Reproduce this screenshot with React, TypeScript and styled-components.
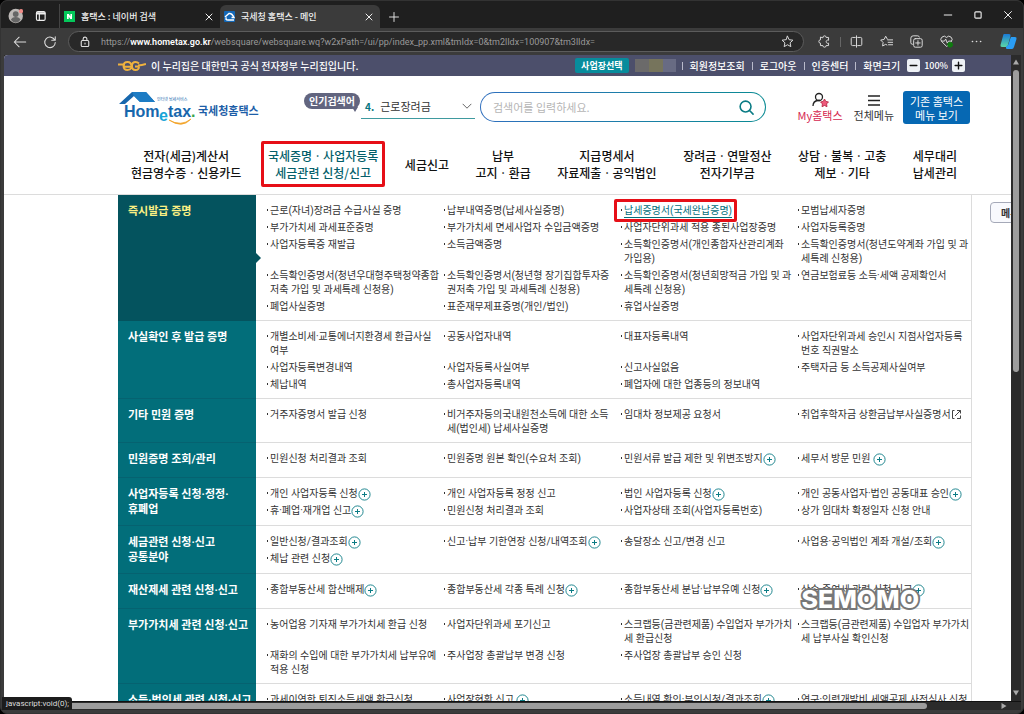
import React from "react";
import styled, { createGlobalStyle, css } from "styled-components";

const Global = createGlobalStyle`
  *, *::before, *::after { box-sizing: border-box; }
  html, body { margin: 0; background: #000; }
  body, button, input, select {
    font-family: "Noto Sans CJK KR", "Noto Sans", sans-serif;
  }
  button, input, select { border: 0; padding: 0; margin: 0; background: none; color: inherit; }
  a { color: inherit; text-decoration: none; }
  ul { list-style: none; margin: 0; padding: 0; }
`;

/* ---------- browser frame ---------- */

const Window = styled.div`
  display: flex;
  flex-direction: column;
  height: 100vh;
  border: 1px solid #333;
  border-radius: 7px;
  background: #3b3b3b;
  overflow: hidden;
  position: relative;
`;

const TitleBar = styled.header`
  display: flex;
  align-items: flex-end;
  flex: none;
  height: 27px;
  padding: 0 10px 0 7px;
  background: #1f1f1f;
  color: #eee;
`;

const TitleTools = styled.div`
  display: flex;
  align-items: center;
  gap: 12px;
  height: 24px;
  width: 52px;
  border-right: 1px solid #444;
  padding-right: 12px;
`;

const Tab = styled.div<{ $active?: boolean }>`
  display: flex;
  align-items: center;
  gap: 6px;
  width: 160px;
  height: 23px;
  padding: 0 7px 0 4px;
  border-radius: 6px 6px 0 0;
  font-size: 9px;
  font-weight: 500;
  background: ${(p) => (p.$active ? "#3b3b3b" : "transparent")};
`;

const TabTitle = styled.span`
  flex: 1;
  white-space: nowrap;
`;

const IconButton = styled.button`
  display: inline-flex;
  align-items: center;
  justify-content: center;
  color: inherit;
  svg { display: block; }
`;

const NewTab = styled(IconButton)`
  width: 28px;
  height: 23px;
`;

const SearchButton = styled(IconButton)`
  color: #0b7c85;
`;

const WindowControls = styled.div`
  display: flex;
  align-items: center;
  gap: 20px;
  height: 27px;
  margin-left: auto;
`;

const Toolbar = styled.div`
  display: flex;
  align-items: center;
  flex: none;
  gap: 16px;
  height: 27px;
  padding: 0 6px 0 12px;
  color: #ddd;
`;

const AddressBar = styled.div`
  display: flex;
  align-items: center;
  flex: 1;
  gap: 10px;
  height: 21px;
  margin: 0 -2px 0 -5px;
  padding: 0 9px 0 10px;
  border: 1px solid #5c5c5c;
  border-radius: 11px;
  background: #282828;
`;

const Url = styled.span`
  flex: 1;
  min-width: 0;
  overflow: hidden;
  white-space: nowrap;
  font-family: Roboto, sans-serif;
  font-size: 9px;
  color: #999;
  b { color: #fff; font-weight: 600; }
`;

const ToolIcons = styled.div`
  display: flex;
  align-items: center;
  gap: 17px;
`;

const Divider = styled.i`
  width: 1px;
  height: 10px;
  margin: 0 -8px;
  background: #666;
`;

const Body = styled.div`
  display: grid;
  grid-template: minmax(0, 1fr) 9px / minmax(0, 1fr) 10px;
  flex: 1;
  min-height: 0;
  margin: 0 2px 3px 3px;
  background: #2b2b2b;
`;

const Viewport = styled.div`
  position: relative;
  overflow: hidden;
  background: #fff;
  border-top-left-radius: 4px;
  color: #333;
`;

const VerticalBar = styled.div`
  display: flex;
  flex-direction: column;
  align-items: center;
  justify-content: space-between;
  padding: 4px 0 5px;
  border-top-right-radius: 4px;
  i { flex: none; width: 6px; height: 302px; margin-bottom: auto; margin-top: 5px; border-radius: 3px; background: #9d9d9d; }
`;

const HorizontalBar = styled.div`
  grid-column: 1 / -1;
  display: flex;
  align-items: center;
  justify-content: space-between;
  padding-right: 14px;
  border-top: 1px solid #111;
  i { width: 92%; height: 6px; border-radius: 3px; background: #9d9d9d; }
`;

const StatusBubble = styled.div`
  position: absolute;
  left: 1px;
  bottom: 3px;
  padding: 0 3px 0 4px;
  border-radius: 0 3px 0 0;
  background: #1c1c1c;
  color: #ddd;
  font-family: Roboto, sans-serif;
  font-size: 8px;
  line-height: 13px;
`;

/* ---------- site ---------- */

const sidePadding = css`
  padding-left: 114px;
  padding-right: 39px;
`;

const GovBar = styled.div`
  ${sidePadding}
  display: flex;
  align-items: center;
  height: 21px;
  background: #4c4f6b;
  color: #fff;
  font-size: 10px;
  font-weight: 500;
  white-space: nowrap;
`;

const GovNotice = styled.span`
  display: flex;
  align-items: center;
  gap: 5px;
`;

const Utilities = styled.div`
  display: flex;
  align-items: center;
  margin-left: auto;
  padding-right: 7px;
  a, span + label, a + label { padding: 0 7px; border-left: 1px solid #b9bacb; line-height: 8px; }
`;

const WorkplaceButton = styled.button`
  height: 15px;
  padding: 0 6px;
  margin-right: 6px;
  border-radius: 2px;
  background: #078c9c;
  color: #fff;
  font-size: 9px;
  font-weight: 700;
  line-height: 15px;
`;

const MaskedName = styled.span`
  width: 41px;
  height: 13px;
  margin-right: 6px;
  background: linear-gradient(90deg, #6b6a6a 0 14px, #76745c 14px 28px, #686b83 28px);
`;

const ZoomButton = styled.button`
  width: 13px;
  height: 13px;
  border-radius: 2px;
  background: #eef1f6;
  color: #111;
  display: flex;
  align-items: center;
  justify-content: center;
`;

const ZoomValue = styled.span`
  padding: 0 4px;
  font-size: 9px;
`;

const Masthead = styled.div`
  ${sidePadding}
  display: flex;
  align-items: flex-start;
  height: 66px;
  padding-top: 15px;
  padding-right: 41px;
`;

const LogoLink = styled.a`
  margin-left: 1px;
  svg { display: block; }
`;

const HotBadge = styled.span`
  position: relative;
  height: 16px;
  margin-left: 42px;
  margin-top: 2px;
  padding: 0 5px;
  border-radius: 8px;
  background: #62657f;
  color: #fff;
  font-size: 10px;
  font-weight: 700;
  line-height: 15px;
  white-space: nowrap;
  &::after {
    content: "";
    position: absolute;
    right: 2px;
    bottom: -3px;
    border: 3px solid transparent;
    border-top: 5px solid #62657f;
    border-bottom: 0;
  }
`;

const HotSelect = styled.label`
  display: flex;
  align-items: center;
  width: 114px;
  height: 28px;
  margin-left: 1px;
  padding: 3px 3px 0 4px;
  border-bottom: 1px solid #3f9a9f;
  font-size: 11px;
  b { color: #087580; font-size: 10px; margin-right: 6px; }
  select { flex: 1; appearance: none; font-size: 11px; color: #333; outline: 0; }
`;

const SearchBox = styled.form`
  display: flex;
  align-items: center;
  flex: 1;
  height: 30px;
  margin-left: 5px;
  margin-top: 1px;
  padding: 0 11px 0 12px;
  border: 1px solid transparent;
  border-radius: 15px;
  background: linear-gradient(#fff, #fff) padding-box, linear-gradient(90deg, #2f6fbe, #0a8b93) border-box;
  input { flex: 1; min-width: 0; font-size: 11px; outline: 0; }
  input::placeholder { color: #b5b5b5; }
`;

const Shortcuts = styled.div`
  display: flex;
  gap: 11px;
  margin-left: 31px;
`;

const Shortcut = styled.a<{ $accent?: boolean }>`
  display: flex;
  flex-direction: column;
  align-items: center;
  font-size: 11px;
  line-height: 16px;
  white-space: nowrap;
  color: ${(p) => (p.$accent ? "#d5264f" : "#333")};
  svg { height: 16px; }
`;

const LegacyButton = styled.button`
  width: 67px;
  height: 33px;
  margin-left: 9px;
  border-radius: 3px;
  background: #0668b3;
  color: #fff;
  font-size: 11px;
  line-height: 14px;
  white-space: nowrap;
`;

const MainNav = styled.nav`
  ${sidePadding}
  height: 53px;
  border-bottom: 1px solid #dcdcdc;
  ul {
    display: flex;
    align-items: center;
    justify-content: space-between;
    height: 44px;
    padding: 0 15px 0 13px;
  }
`;

const NavLink = styled.a<{ $current?: boolean }>`
  position: relative;
  display: block;
  text-align: center;
  font-size: 12px;
  font-weight: 500;
  line-height: 17px;
  white-space: nowrap;
  color: ${(p) => (p.$current ? "#045f6b" : "#111")};
`;

const Marker = styled.span<{ $tight?: boolean }>`
  position: absolute;
  inset: ${(p) => (p.$tight ? "-5px -5px -4px -10px" : "-6px -7px")};
  border: 3px solid #e60f17;
  border-radius: 2px;
`;

const MegaMenu = styled.div`
  ${sidePadding}
  font-family: Roboto, "Noto Sans CJK KR", sans-serif;
`;

const Section = styled.section<{ $current?: boolean }>`
  display: grid;
  grid-template-columns: 138px minmax(0, 1fr);
  min-height: 35px;
  h2 {
    position: relative;
    margin: 0;
    padding: 9px 0 8px 10px;
    border-bottom: 1px solid ${(p) => (p.$current ? "#04535e" : "#056270")};
    background: ${(p) => (p.$current ? "#04535e" : "#026e7a")};
    color: ${(p) => (p.$current ? "#fbf083" : "#fff")};
    font-size: 11px;
    font-weight: 700;
    line-height: 15px;
    white-space: pre;
  }
  h2::after {
    content: ${(p) => (p.$current ? '""' : "none")};
    position: absolute;
    top: 50%;
    left: 100%;
    margin-top: -5px;
    border: 5px solid transparent;
    border-left-color: #04535e;
    border-right: 0;
  }
`;

const Items = styled.ul`
  display: grid;
  grid-template-columns: repeat(3, minmax(0, 1fr)) 174px;
  align-content: start;
  row-gap: 3px;
  padding: 9px 0 6px 10px;
  border-right: 1px solid #dcdcdc;
  border-bottom: 1px solid #dcdcdc;
`;

const Item = styled.li`
  padding-left: 4px;
  position: relative;
  font-size: 10px;
  line-height: 14px;
  white-space: pre;
  &::before {
    content: "";
    position: absolute;
    left: 1px;
    top: 5px;
    width: 1px;
    height: 2px;
    background: #333;
  }
  svg { vertical-align: top; margin: 1px 0 -1px 0; }
`;

const MarkedLink = styled.a`
  position: relative;
  display: inline-block;
  color: #04707c;
  box-shadow: inset 0 -1px #04707c;
`;

const SideMenu = styled.button`
  position: absolute;
  top: 147px;
  left: calc(100% - 21px);
  width: 60px;
  height: 21px;
  padding-left: 10px;
  border: 1px solid #a5a9b8;
  border-radius: 4px;
  background: #f8f9fd;
  font-size: 10px;
  font-weight: 700;
  line-height: 19px;
  text-align: left;
  white-space: nowrap;
`;

const Watermark = styled.div`
  position: absolute;
  right: 92px;
  top: 527px;
  color: #fff;
  font-family: Inter, sans-serif;
  font-size: 25px;
  font-weight: 800;
  line-height: 34px;
  -webkit-text-stroke: 4px #777;
  paint-order: stroke fill;
`;

/* ---------- icons ---------- */

const Svg = ({ s = 12, children, sw = 1.2 }: { s?: number; sw?: number; children: React.ReactNode }) => (
  <svg width={s} height={s} viewBox="0 0 16 16" fill="none" stroke="currentColor" strokeWidth={sw} strokeLinecap="round" strokeLinejoin="round" aria-hidden="true">
    {children}
  </svg>
);

const CloseIcon = ({ s = 8 }: { s?: number }) => (
  <Svg s={s} sw={2}><path d="M2 2l12 12M14 2L2 14" /></Svg>
);

const PlusCircle = () => (
  <svg width="13" height="13" viewBox="0 0 13 13" fill="none" stroke="#0b7c85" aria-hidden="true">
    <circle cx="6.5" cy="6.5" r="5.6" strokeWidth="0.9" />
    <path d="M6.500 4v5M4 6.500h5" strokeWidth="1" />
  </svg>
);

const OpenIcon = () => (
  <svg width="11" height="11" viewBox="0 0 11 11" fill="none" stroke="#444" aria-hidden="true">
    <path d="M3.500 1.500h-2v8h2M6 9.500h3.500V6.500M6 1.500h3.500v3M9.500 1.500L4 7" />
  </svg>
);

const Logo = () => (
  <svg width="143" height="34" viewBox="0 0 143 34" role="img" aria-label="Hometax 국세청홈택스">
    <path d="M0 13L13 1h14l9 10H21l-6-6L6 13z" fill="#1767ad" />
    <path d="M15 5l6 6h15L27 1H13z" fill="#1d7cc4" />
    <g fontFamily="Liberation Sans, sans-serif" fontWeight="700" fontSize="16" fill="#1767ad">
      <text x="5" y="26">Hom</text>
      <text x="40" y="30" fill="#18a5d8">e</text>
      <text x="49" y="26">tax</text>
      <text x="72" y="26" fill="#3aa648">.</text>
    </g>
    <path d="M50 29q12 7 22-1q-9 10-22 1z" fill="#f2a52b" stroke="#f2a52b" strokeWidth="0.8" />
    <text x="38" y="10" fontFamily="Noto Sans CJK KR, sans-serif" fontSize="4" fill="#1767ad">인터넷 납세서비스</text>
    <text x="79" y="24" fontFamily="Noto Sans CJK KR, sans-serif" fontWeight="700" fontSize="11" fill="#1d5ea8">국세청홈택스</text>
  </svg>
);

/* ---------- data ---------- */

type Entry = { t: string; plus?: boolean; open?: boolean; marked?: boolean } | string;

const navItems: { label: [string, string?]; current?: boolean }[] = [
  { label: ["전자(세금)계산서", "현금영수증ㆍ신용카드"] },
  { label: ["국세증명ㆍ사업자등록", "세금관련 신청/신고"], current: true },
  { label: ["세금신고"] },
  { label: ["납부", "고지ㆍ환급"] },
  { label: ["지급명세서", "자료제출ㆍ공익법인"] },
  { label: ["장려금ㆍ연말정산", "전자기부금"] },
  { label: ["상담ㆍ불복ㆍ고충", "제보ㆍ기타"] },
  { label: ["세무대리", "납세관리"] },
];

const p = (t: string): Entry => ({ t, plus: true });

const sections: { title: string; current?: boolean; items: Entry[] }[] = [
  {
    title: "즉시발급 증명",
    current: true,
    items: [
      "근로(자녀)장려금 수급사실 증명", "납부내역증명(납세사실증명)", { t: "납세증명서(국세완납증명)", marked: true }, "모범납세자증명",
      "부가가치세 과세표준증명", "부가가치세 면세사업자 수입금액증명", "사업자단위과세 적용 종된사업장증명", "사업자등록증명",
      "사업자등록증 재발급", "소득금액증명", "소득확인증명서(개인종합자산관리계좌\n가입용)", "소득확인증명서(청년도약계좌 가입 및 과\n세특례 신청용)",
      "소득확인증명서(청년우대형주택청약종합\n저축 가입 및 과세특례 신청용)", "소득확인증명서(청년형 장기집합투자증\n권저축 가입 및 과세특례 신청용)", "소득확인증명서(청년희망적금 가입 및 과\n세특례 신청용)", "연금보험료등 소득·세액 공제확인서",
      "폐업사실증명", "표준재무제표증명(개인/법인)", "휴업사실증명",
    ],
  },
  {
    title: "사실확인 후 발급 증명",
    items: [
      "개별소비세·교통에너지환경세 환급사실\n여부", "공동사업자내역", "대표자등록내역", "사업자단위과세 승인시 지점사업자등록\n번호 직권말소",
      "사업자등록변경내역", "사업자등록사실여부", "신고사실없음", "주택자금 등 소득공제사실여부",
      "체납내역", "총사업자등록내역", "폐업자에 대한 업종등의 정보내역",
    ],
  },
  {
    title: "기타 민원 증명",
    items: ["거주자증명서 발급 신청", "비거주자등의국내원천소득에 대한 소득\n세(법인세) 납세사실증명", "임대차 정보제공 요청서", { t: "취업후학자금 상환금납부사실증명서", open: true }],
  },
  {
    title: "민원증명 조회/관리",
    items: ["민원신청 처리결과 조회", "민원증명 원본 확인(수요처 조회)", p("민원서류 발급 제한 및 위변조방지"), p("세무서 방문 민원 ")],
  },
  {
    title: "사업자등록 신청·정정·\n휴폐업",
    items: [
      p("개인 사업자등록 신청"), "개인 사업자등록 정정 신고", p("법인 사업자등록 신청"), p("개인 공동사업자·법인 공동대표 승인"),
      p("휴·폐업·재개업 신고"), "민원신청 처리결과 조회", "사업자상태 조회(사업자등록번호)", "상가 임대차 확정일자 신청 안내",
    ],
  },
  {
    title: "세금관련 신청·신고\n공통분야",
    items: [
      p("일반신청/결과조회"), p("신고·납부 기한연장 신청/내역조회"), "송달장소 신고/변경 신고", p("사업용·공익법인 계좌 개설/조회"),
      p("체납 관련 신청"),
    ],
  },
  {
    title: "재산제세 관련 신청·신고",
    items: [p("종합부동산세 합산배제"), p("종합부동산세 각종 특례 신청"), p("종합부동산세 분납·납부유예 신청"), p("상속·증여세 관련 신청·신고")],
  },
  {
    title: "부가가치세 관련 신청·신고",
    items: [
      "농어업용 기자재 부가가치세 환급 신청", "사업자단위과세 포기신고", "스크랩등(금관련제품) 수입업자 부가가치\n세 환급신청", "스크랩등(금관련제품) 수입업자 부가가치\n세 납부사실 확인신청",
      "재화의 수입에 대한 부가가치세 납부유예\n적용 신청", "주사업장 총괄납부 변경 신청", "주사업장 총괄납부 승인 신청",
    ],
  },
  {
    title: "소득·법인세 관련 신청·신고",
    items: ["과세이연한 퇴직소득세액 환급신청", p("사업장현황 신고 "), p("소득내역 확인·부인신청/결과조회"), "연구·인력개발비 세액공제 사전심사 신청"],
  },
];

const MenuEntry = ({ entry }: { entry: Entry }) => {
  const e = typeof entry === "string" ? { t: entry } : entry;
  return (
    <Item>
      {e.marked ? (
        <MarkedLink href="#">{e.t}<Marker $tight /></MarkedLink>
      ) : (
        <a href="#">{e.t}</a>
      )}
      {e.plus && <PlusCircle />}
      {e.open && <OpenIcon />}
    </Item>
  );
};

/* ---------- page ---------- */

export default function App() {
  return (
    <>
      <Global />
      <Window>
        <TitleBar>
          <TitleTools>
            <svg width="16" height="16" viewBox="0 0 16 16" aria-hidden="true">
              <circle cx="8" cy="8" r="7.5" fill="#bdb9b6" />
              <circle cx="8" cy="6" r="3" fill="#666" />
              <path d="M3 12q1-3 5-3t5 3q-2 3-5 3t-5-3z" fill="#666" />
              <circle cx="13.5" cy="3" r="2.2" fill="#f08c88" />
            </svg>
            <Svg s={12} sw={1.6}><rect x="2" y="2" width="12" height="12" rx="2" /><path d="M2 5h12M6 5v9M2.5 3.5h11" /></Svg>
          </TitleTools>
          <Tab>
            <svg width="11" height="11" viewBox="0 0 11 11" aria-hidden="true">
              <rect width="11" height="11" fill="#04c75a" />
              <path d="M3 8V3h1.8l1.6 2.5V3H8v5H6.300L4.700 5.600V8z" fill="#fff" />
            </svg>
            <TabTitle>홈택스 : 네이버 검색</TabTitle>
            <IconButton aria-label="탭 닫기"><CloseIcon /></IconButton>
          </Tab>
          <Tab $active>
            <svg width="11" height="11" viewBox="0 0 11 11" aria-hidden="true">
              <rect width="11" height="11" rx="1" fill="#1368b8" />
              <path d="M1 6L5 2.500q3-.5 5 4H7.500M2.500 6.500Q1 9 4 9h6" fill="none" stroke="#fff" strokeWidth="1.400" />
            </svg>
            <TabTitle>국세청 홈택스 - 메인</TabTitle>
            <IconButton aria-label="탭 닫기"><CloseIcon /></IconButton>
          </Tab>
          <NewTab aria-label="새 탭"><Svg s={12}><path d="M8 2v12M2 8h12" /></Svg></NewTab>
          <WindowControls>
            <IconButton aria-label="최소화"><Svg s={10} sw={1.6}><path d="M2 8h12" /></Svg></IconButton>
            <IconButton aria-label="최대화"><Svg s={10} sw={1.800}><rect x="3" y="3" width="10" height="10" rx="1.500" /></Svg></IconButton>
            <IconButton aria-label="닫기"><Svg s={10} sw={1.6}><path d="M2.500 2.500l11 11M13.500 2.500l-11 11" /></Svg></IconButton>
          </WindowControls>
        </TitleBar>

        <Toolbar>
          <IconButton aria-label="뒤로"><Svg s={14}><path d="M14.500 8h-13M7 2.500L1.500 8 7 13.500" /></Svg></IconButton>
          <IconButton aria-label="새로 고침"><Svg s={14}><path d="M13.500 6A6 6 0 1 0 14 8.500M14 2v4h-4" /></Svg></IconButton>
          <AddressBar>
            <Svg s={12} sw={1.5}><rect x="3" y="6" width="10" height="8" rx="1.500" /><path d="M5.500 6V4a2.500 2.500 0 0 1 5 0v2M8 9.500v1" /></Svg>
            <Url>https://<b>www.hometax.go.kr</b>/websquare/websquare.wq?w2xPath=/ui/pp/index_pp.xml&amp;tmIdx=0&amp;tm2lIdx=100907&amp;tm3lIdx=</Url>
            <IconButton aria-label="즐겨찾기 추가"><Svg s={13}><path d="M8 1.500l2 4.300 4.700.600-3.500 3.200.900 4.700L8 12l-4.100 2.300.900-4.700L1.300 6.400 6 5.800z" /></Svg></IconButton>
          </AddressBar>
          <ToolIcons>
            <IconButton aria-label="확장"><Svg s={13}><path d="M6 3a2 2 0 0 1 4 0h3v3.500a2 2 0 1 0 0 3.500v3H10a2 2 0 0 1-4 0H3v-3a2 2 0 0 1 0-4V3z" /></Svg></IconButton>
            <Divider />
            <IconButton aria-label="화면 분할"><Svg s={13}><path d="M6.500 3H3a1.500 1.500 0 0 0-1.500 1.500v7A1.500 1.500 0 0 0 3 13h3.500M9.500 3H13a1.500 1.500 0 0 1 1.500 1.500v7A1.500 1.500 0 0 1 13 13H9.500M8 1v14" /></Svg></IconButton>
            <IconButton aria-label="즐겨찾기"><Svg s={13}><path d="M9 5L7 1.500 5 5.500.800 6.200l3 3-.600 4.300L7 11.500l1.500.800M9.500 6h6M10 9h5.500M10.500 12h5" /></Svg></IconButton>
            <IconButton aria-label="컬렉션"><Svg s={13}><path d="M3 11.500A2 2 0 0 1 1 9.500V4a3 3 0 0 1 3-3h5.500a2 2 0 0 1 2 1.500" /><rect x="4.500" y="4.500" width="10.500" height="10.500" rx="2" /><path d="M9.800 7v5.500M7 9.800h5.500" /></Svg></IconButton>
            <IconButton aria-label="브라우저 필수 요소">
              <Svg s={13}><path d="M8 14L2 8a3.800 3.800 0 0 1 6-5 3.800 3.800 0 0 1 6 5zM2 7.500h3.500L7 5l2 5 1.500-2.500H14" /><circle cx="12.500" cy="12" r="3" fill="#107c10" stroke="#107c10" /></Svg>
            </IconButton>
            <IconButton aria-label="설정 및 기타"><Svg s={13} sw={2}><path d="M3 8h.1M8 8h.1M13 8h.1" /></Svg></IconButton>
            <IconButton aria-label="Copilot">
              <svg width="17" height="17" viewBox="0 0 17 17" aria-hidden="true">
                <defs><linearGradient id="cp" x1="0" y1="0" x2="0" y2="1"><stop stopColor="#1a7bd8" /><stop offset="1" stopColor="#5bd6a4" /></linearGradient></defs>
                <path d="M4 1h5q2 0 1.500 2L8 12q-.6 2-2 2H2q-2 0-1.500-2L3 3q.300-2 1-2z" fill="url(#cp)" />
                <path d="M11 4h4q2 0 1.500 2L14 14q-.6 2-2 2H7q-1.500 0-1-2l.500-1q1.500 0 2-2l2-6z" fill="#2a9df4" />
              </svg>
            </IconButton>
          </ToolIcons>
        </Toolbar>

        <Body>
          <Viewport>
            <GovBar>
              <GovNotice>
                <svg width="28" height="12" viewBox="0 0 28 12" fill="none" stroke="#efb23e" strokeWidth="1.900" aria-hidden="true">
                  <path d="M0 4.500h7M5 6.800h8.500q0-4.800-4-4.800T5.500 6q0 4 4 4 2.500 0 4-2M21 3.500Q19.500 2 17.500 2 14 2 14 6t3.500 4q3.500 0 3.500-3.500h-4M20 5.500q4 0 8-1.500" />
                </svg>
                이 누리집은 대한민국 공식 전자정부 누리집입니다.
              </GovNotice>
              <Utilities>
                <WorkplaceButton>사업장선택</WorkplaceButton>
                <MaskedName />
                <a href="#">회원정보조회</a>
                <a href="#">로그아웃</a>
                <a href="#">인증센터</a>
                <label htmlFor="zoom-out">화면크기</label>
                <ZoomButton id="zoom-out" aria-label="축소"><Svg s={9} sw={2.500}><path d="M2 8h12" /></Svg></ZoomButton>
                <ZoomValue>100%</ZoomValue>
                <ZoomButton aria-label="확대"><Svg s={9} sw={2.500}><path d="M2 8h12M8 2v12" /></Svg></ZoomButton>
              </Utilities>
            </GovBar>

            <Masthead>
              <LogoLink href="#"><Logo /></LogoLink>
              <HotBadge>인기검색어</HotBadge>
              <HotSelect>
                <b>4.</b>
                <select aria-label="인기검색어"><option>근로장려금</option></select>
                <Svg s={10}><path d="M1.500 5L8 11.500 14.500 5" /></Svg>
              </HotSelect>
              <SearchBox onSubmit={(e) => e.preventDefault()}>
                <input type="text" aria-label="검색어" placeholder="검색어를 입력하세요." />
                <SearchButton aria-label="검색"><Svg s={15} sw={1.700}><circle cx="7" cy="7" r="5.800" /><path d="M11.500 11.500L15 15" /></Svg></SearchButton>
              </SearchBox>
              <Shortcuts>
                <Shortcut href="#" $accent>
                  <svg width="17" height="16" viewBox="0 0 17 16" fill="none" aria-hidden="true">
                    <circle cx="7" cy="6" r="3.500" stroke="#222" strokeWidth="1.300" />
                    <path d="M1 15q0-5 5-5.500h2" stroke="#222" strokeWidth="1.300" />
                    <path d="M12.500 8l1.300 2.400 2.700.500-1.900 2 .400 2.800-2.500-1.200-2.500 1.200.400-2.800-1.900-2 2.700-.500z" fill="#ee5a7c" stroke="#b3213f" strokeWidth="0.800" />
                  </svg>
                  My홈택스
                </Shortcut>
                <Shortcut href="#">
                  <svg width="14" height="16" viewBox="0 0 14 16" stroke="#222" strokeWidth="1.600" aria-hidden="true"><path d="M1 5h12M1 9.500h12M1 14h12" /></svg>
                  전체메뉴
                </Shortcut>
              </Shortcuts>
              <LegacyButton>기존 홈택스<br />메뉴 보기</LegacyButton>
            </Masthead>

            <MainNav>
              <ul>
                {navItems.map((n) => (
                  <li key={n.label[0]}>
                    <NavLink href="#" $current={n.current}>
                      {n.label[0]}
                      {n.label[1] && <><br />{n.label[1]}</>}
                      {n.current && <Marker />}
                    </NavLink>
                  </li>
                ))}
              </ul>
            </MainNav>

            <MegaMenu>
              {sections.map((s) => (
                <Section key={s.title} $current={s.current}>
                  <h2>{s.title}</h2>
                  <Items>
                    {s.items.map((e, i) => <MenuEntry key={i} entry={e} />)}
                  </Items>
                </Section>
              ))}
            </MegaMenu>
            <SideMenu>메뉴</SideMenu>
            <Watermark>SEMOMO</Watermark>
          </Viewport>
          <VerticalBar>
            <svg width="6" height="6" viewBox="0 0 6 6" aria-hidden="true"><path d="M0 5.500L3 .500l3 5z" fill="#aaa" /></svg>
            <i />
            <svg width="6" height="6" viewBox="0 0 6 6" aria-hidden="true"><path d="M0 .500L3 5.500l3-5z" fill="#aaa" /></svg>
          </VerticalBar>
          <HorizontalBar>
            <i />
            <svg width="6" height="6" viewBox="0 0 6 6" aria-hidden="true"><path d="M.500 0L5.500 3l-5 3z" fill="#aaa" /></svg>
          </HorizontalBar>
        </Body>
        <StatusBubble>javascript:void(0);</StatusBubble>
      </Window>
    </>
  );
}
